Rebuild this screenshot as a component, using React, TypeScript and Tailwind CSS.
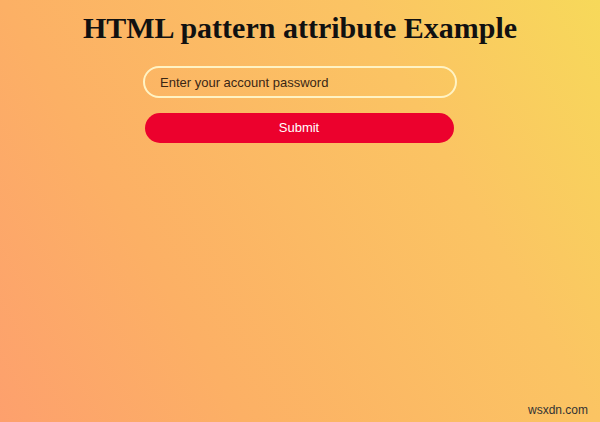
export default function App() {
  return (
    <div className="relative h-[422px] w-[600px] overflow-hidden bg-[linear-gradient(60deg,#fda06d_0%,#fcb065_29%,#fbc463_71%,#f7d95a_100%)] font-['Liberation_Sans',Arial,sans-serif]">
      <div className="flex flex-col items-center">
        <h1 className="mt-[11px] font-['Liberation_Serif','Times_New_Roman',serif] text-[30px] leading-[34px] font-bold text-[#111]">
          HTML pattern attribute Example
        </h1>
        <form className="mt-[21px] flex flex-col items-center" onSubmit={(e) => e.preventDefault()}>
          <input
            type="password"
            placeholder="Enter your account password"
            className="h-[32px] w-[314px] rounded-full border-2 border-[#fff3c4] bg-transparent px-[15px] text-[13px] text-[#3a2615] outline-none placeholder:text-[#3a2615]"
          />
          <button
            type="submit"
            className="mt-[15px] ml-[-2px] h-[30px] w-[309px] rounded-full bg-[#ec012d] text-[13px] text-white"
          >
            Submit
          </button>
        </form>
      </div>
      <span className="absolute right-[12px] bottom-[3px] text-[12px] text-[#333]">wsxdn.com</span>
    </div>
  );
}
